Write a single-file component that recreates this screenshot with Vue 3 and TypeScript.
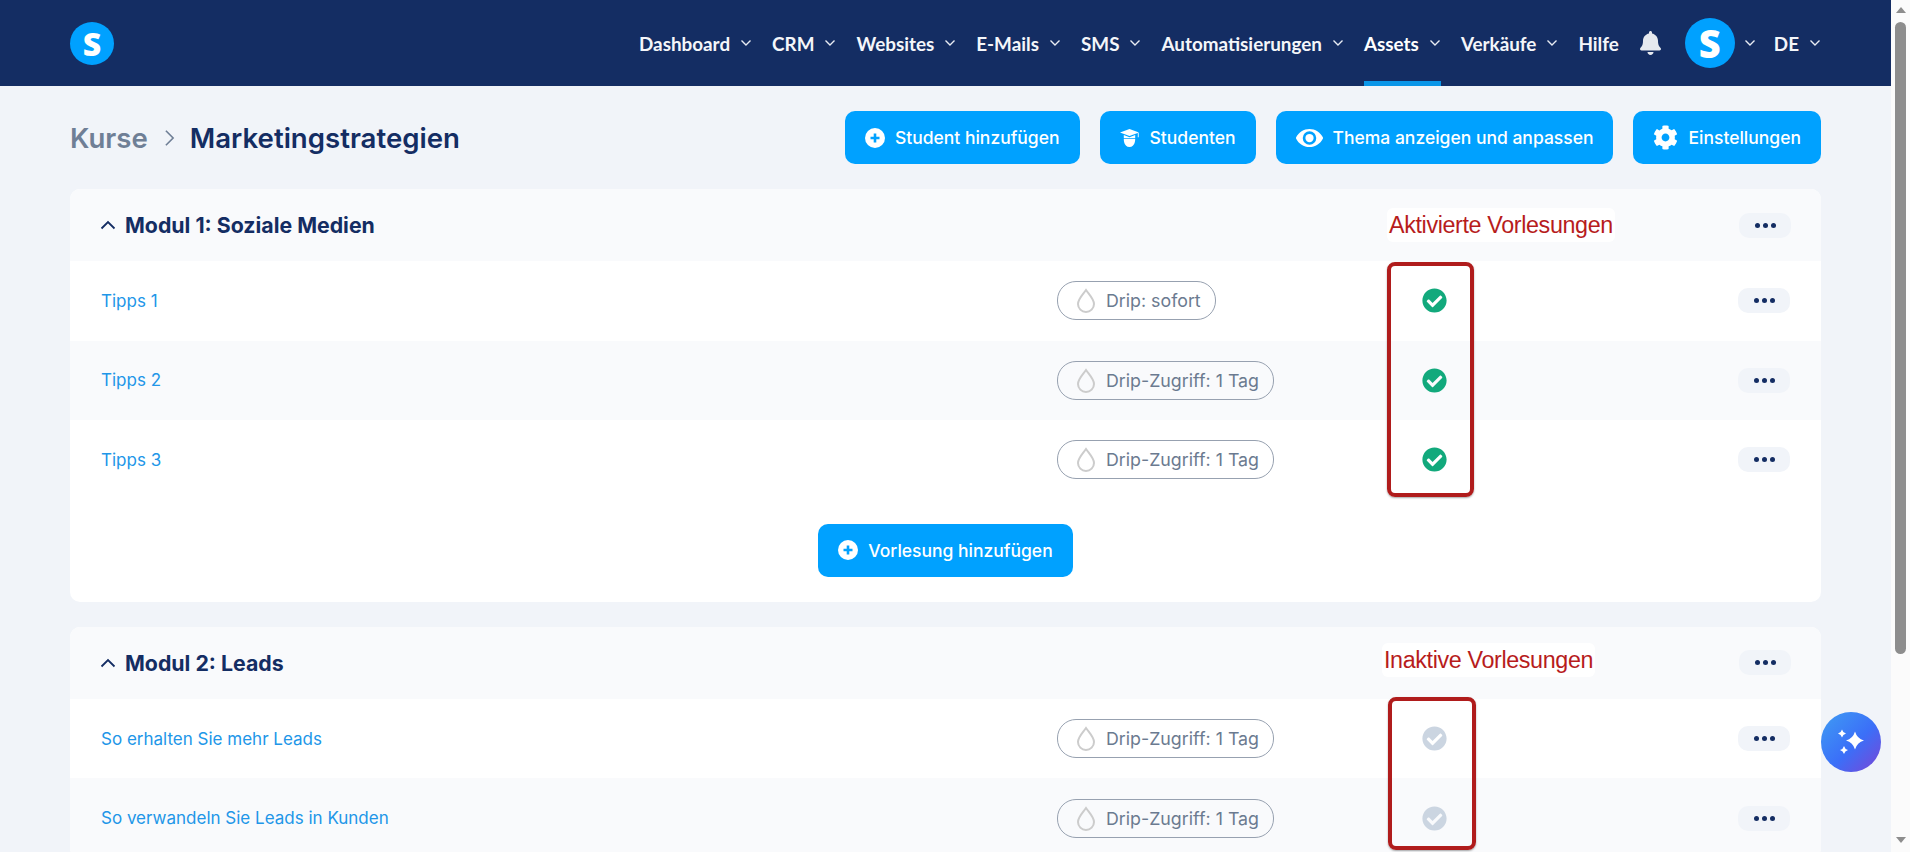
<script setup lang="ts">
interface Lecture {
  title: string;
  drip: string;
}
interface Module {
  title: string;
  active: boolean;
  note: string;
  lectures: Lecture[];
  canAdd: boolean;
}

const nav = [
  { label: "Dashboard", menu: true },
  { label: "CRM", menu: true },
  { label: "Websites", menu: true },
  { label: "E-Mails", menu: true },
  { label: "SMS", menu: true },
  { label: "Automatisierungen", menu: true },
  { label: "Assets", menu: true, current: true },
  { label: "Verkäufe", menu: true },
  { label: "Hilfe", menu: false },
];

const modules: Module[] = [
  {
    title: "Modul 1: Soziale Medien",
    active: true,
    note: "Aktivierte Vorlesungen",
    canAdd: true,
    lectures: [
      { title: "Tipps 1", drip: "Drip: sofort" },
      { title: "Tipps 2", drip: "Drip-Zugriff: 1 Tag" },
      { title: "Tipps 3", drip: "Drip-Zugriff: 1 Tag" },
    ],
  },
  {
    title: "Modul 2: Leads",
    active: false,
    note: "Inaktive Vorlesungen",
    canAdd: false,
    lectures: [
      { title: "So erhalten Sie mehr Leads", drip: "Drip-Zugriff: 1 Tag" },
      { title: "So verwandeln Sie Leads in Kunden", drip: "Drip-Zugriff: 1 Tag" },
    ],
  },
];

const checkPath =
  "M504 256c0 136.967-111.033 248-248 248S8 392.967 8 256 119.033 8 256 8s248 111.033 248 248zM227.314 387.314l184-184c6.248-6.248 6.248-16.379 0-22.627l-22.627-22.627c-6.248-6.249-16.379-6.249-22.628 0L216 308.118l-70.059-70.059c-6.248-6.248-16.379-6.248-22.628 0l-22.627 22.627c-6.248 6.248-6.248 16.379 0 22.627l104 104c6.249 6.25 16.379 6.25 22.628.001z";
</script>

<template>
  <div class="screen">
    <div class="page">
      <header class="topbar">
        <div class="logo">S</div>
        <nav class="nav">
          <a v-for="item in nav" :key="item.label" class="nav-item" :class="{ current: item.current }">
            {{ item.label }}
            <svg v-if="item.menu" class="chev" viewBox="0 0 12 8"><path d="M1.5 1.5 6 6l4.5-4.5" /></svg>
          </a>
          <svg class="bell" viewBox="0 0 448 512">
            <path d="M224 512c35.32 0 63.97-28.65 63.97-64H160.03c0 35.35 28.65 64 63.97 64zm215.39-149.71c-19.32-20.76-55.47-51.99-55.47-154.29 0-77.7-54.48-139.9-127.94-155.16V32c0-17.67-14.32-32-31.98-32s-31.98 14.33-31.98 32v20.84C118.56 68.1 64.08 130.3 64.08 208c0 102.3-36.15 133.53-55.47 154.29-6 6.45-8.66 14.16-8.61 21.71.11 16.4 12.98 32 32.1 32h383.8c19.12 0 32-15.6 32.1-32 .05-7.55-2.61-15.27-8.61-21.71z" />
          </svg>
          <div class="avatar">S</div>
          <svg class="chev" viewBox="0 0 12 8"><path d="M1.5 1.5 6 6l4.5-4.5" /></svg>
          <a class="nav-item lang">
            DE
            <svg class="chev" viewBox="0 0 12 8"><path d="M1.5 1.5 6 6l4.5-4.5" /></svg>
          </a>
        </nav>
      </header>

      <main class="content">
        <div class="title-bar">
          <div class="crumbs">
            <span class="crumb-parent">Kurse</span>
            <svg class="crumb-sep" viewBox="0 0 12 20"><path d="M2 2l8 8-8 8" /></svg>
            <span class="crumb-current">Marketingstrategien</span>
          </div>
          <div class="actions">
            <button class="btn">
              <svg class="btn-icon" viewBox="0 0 20 20"><circle cx="10" cy="10" r="10" fill="#fff" /><path d="M10 5.5v9M5.5 10h9" stroke="#00a1ff" stroke-width="2.6" /></svg>
              Student hinzufügen
            </button>
            <button class="btn">
              <svg class="btn-icon" viewBox="0 0 20 20" fill="#fff">
                <path d="M9.500 1 19 4.500 9.500 8 0 4.500z" />
                <path d="M3.800 7 9.500 9.200 15.200 7v3H3.800z" />
                <path d="M3.800 10.800h11.400c0 1 .1 8.200-5.700 8.200S3.800 11.800 3.800 10.800z" />
                <path d="M17.800 5h.9v4.200h-.9z" />
              </svg>
              Studenten
            </button>
            <button class="btn">
              <svg class="btn-icon eye" viewBox="0 0 576 512" fill="#fff">
                <path d="M572.52 241.4C518.29 135.59 410.93 64 288 64S57.68 135.64 3.48 241.41a32.35 32.35 0 0 0 0 29.19C57.71 376.41 165.07 448 288 448s230.32-71.64 284.52-177.41a32.35 32.35 0 0 0 0-29.19zM288 400a144 144 0 1 1 144-144 143.93 143.93 0 0 1-144 144z" />
                <circle cx="288" cy="256" r="88" />
              </svg>
              Thema anzeigen und anpassen
            </button>
            <button class="btn">
              <svg class="btn-icon gear" viewBox="0 0 512 512" fill="#fff">
                <path d="M487.4 315.7l-42.6-24.6c4.3-23.2 4.3-47 0-70.2l42.6-24.6c4.9-2.8 7.1-8.6 5.5-14-11.1-35.6-30-67.8-54.7-94.6-3.8-4.1-10-5.1-14.8-2.3L380.8 110c-17.9-15.4-38.5-27.3-60.8-35.1V25.8c0-5.6-3.9-10.5-9.4-11.7-36.7-8.2-74.3-7.8-109.2 0-5.5 1.2-9.4 6.1-9.4 11.7V75c-22.2 7.9-42.8 19.8-60.8 35.1L88.7 85.5c-4.9-2.8-11-1.9-14.8 2.3-24.7 26.7-43.6 58.9-54.7 94.6-1.7 5.4.6 11.2 5.5 14L67.3 221c-4.3 23.2-4.3 47 0 70.2l-42.6 24.6c-4.9 2.8-7.1 8.6-5.5 14 11.1 35.6 30 67.8 54.7 94.6 3.8 4.1 10 5.1 14.8 2.3l42.6-24.6c17.9 15.4 38.5 27.3 60.8 35.1v49.2c0 5.6 3.9 10.5 9.4 11.7 36.7 8.2 74.3 7.8 109.2 0 5.5-1.2 9.4-6.1 9.4-11.7v-49.2c22.2-7.9 42.8-19.8 60.8-35.1l42.6 24.6c4.9 2.8 11 1.9 14.8-2.3 24.7-26.7 43.6-58.9 54.7-94.6 1.5-5.5-.7-11.3-5.6-14.1zM256 336c-44.1 0-80-35.9-80-80s35.9-80 80-80 80 35.9 80 80-35.9 80-80 80z" />
              </svg>
              Einstellungen
            </button>
          </div>
        </div>

        <section v-for="mod in modules" :key="mod.title" class="module" :class="mod.active ? 'is-active' : 'is-inactive'">
          <div class="module-head">
            <div class="module-title">
              <svg class="collapse" viewBox="0 0 16 10"><path d="M1.5 8.5 8 2l6.5 6.5" /></svg>
              {{ mod.title }}
            </div>
            <button class="dots"><i /><i /><i /></button>
          </div>

          <div v-for="lecture in mod.lectures" :key="lecture.title" class="lecture">
            <a class="lecture-link">{{ lecture.title }}</a>
            <div>
              <span class="drip">
                <svg class="drop" viewBox="0 0 20 25"><path d="M10 2C7 6.5 2 11 2 16a8 8 0 0 0 16 0C18 11 13 6.5 10 2z" /></svg>
                {{ lecture.drip }}
              </span>
            </div>
            <svg class="state" :class="{ on: mod.active }" viewBox="0 0 512 512"><path :d="checkPath" /></svg>
            <button class="dots"><i /><i /><i /></button>
          </div>

          <div v-if="mod.canAdd" class="module-foot">
            <button class="btn">
              <svg class="btn-icon" viewBox="0 0 20 20"><circle cx="10" cy="10" r="10" fill="#fff" /><path d="M10 5.5v9M5.5 10h9" stroke="#00a1ff" stroke-width="2.6" /></svg>
              Vorlesung hinzufügen
            </button>
          </div>

          <span class="note">{{ mod.note }}</span>
          <div class="note-box"></div>
        </section>
      </main>

      <button class="fab" aria-label="KI">
        <svg viewBox="0 0 30 30" fill="#fff">
          <path d="M19 4.500Q21 11.500 28 13.500Q21 15.500 19 22.500Q17 15.500 10 13.500Q17 11.500 19 4.500z" />
          <path d="M6 2.500Q6.800 5.700 10 6.500Q6.800 7.300 6 10.500Q5.200 7.300 2 6.500Q5.200 5.700 6 2.500z" />
          <path d="M8 19Q8.800 22.200 12 23Q8.800 23.800 8 27Q7.200 23.800 4 23Q7.200 22.200 8 19z" />
        </svg>
      </button>
    </div>

    <div class="scrollbar">
      <span class="arrow up"></span>
      <span class="thumb"></span>
      <span class="arrow down"></span>
    </div>
  </div>
</template>

<style scoped>
.screen {
  display: flex;
  height: 852px;
  overflow: hidden;
  font-family: Inter, "Liberation Sans", sans-serif;
  color: #142d63;
}
.page {
  position: relative;
  flex: 1;
  min-width: 0;
  background: #f1f4f9;
}

.topbar {
  display: flex;
  align-items: center;
  justify-content: space-between;
  height: 86px;
  padding: 0 70px;
  background: #142d63;
}
.logo,
.avatar {
  display: flex;
  align-items: center;
  justify-content: center;
  border-radius: 50%;
  background: #00a1ff;
  color: #fff;
  font-family: "Open Sans", sans-serif;
  font-weight: 800;
}
.logo {
  width: 44px;
  height: 43px;
  font-size: 32px;
}
.nav {
  display: flex;
  align-items: center;
  height: 86px;
  color: #f4f6fa;
}
.nav-item {
  position: relative;
  display: flex;
  align-items: center;
  gap: 10px;
  height: 86px;
  margin-right: 20px;
  font-family: Lato, sans-serif;
  font-size: 18.850px;
  font-weight: 700;
}
.nav-item.current {
  color: #fff;
}
.nav-item.current::after {
  content: "";
  position: absolute;
  left: 0;
  right: 0;
  bottom: 0;
  height: 5px;
  background: #0a96e8;
}
.nav-item.lang {
  margin: 0 0 0 18px;
}
.chev {
  width: 12px;
  height: 8px;
  fill: none;
  stroke: #e8ecf3;
  stroke-width: 1.4;
}
.bell {
  width: 21px;
  height: 24px;
  margin: 0 24px 0 1px;
  fill: #e6e9ef;
}
.avatar {
  width: 50px;
  height: 50px;
  margin-right: 9px;
  font-size: 38px;
}

.content {
  padding: 25px 70px 0;
}
.title-bar {
  display: flex;
  align-items: center;
  justify-content: space-between;
  height: 53px;
  margin-bottom: 25px;
}
.crumbs {
  display: flex;
  align-items: center;
  font-size: 27.600px;
  font-weight: 600;
}
.crumb-parent {
  color: #6f7f96;
}
.crumb-sep {
  width: 11px;
  height: 18px;
  margin: 0 15px 0 16px;
  fill: none;
  stroke: #6f7f96;
  stroke-width: 1.8;
}
.actions {
  display: flex;
  gap: 20px;
}
.btn {
  display: inline-flex;
  align-items: center;
  gap: 10px;
  height: 53px;
  padding: 0 20px;
  border: 0;
  border-radius: 10px;
  background: #00a1ff;
  color: #fff;
  font-family: Inter, sans-serif;
  font-size: 17.500px;
  font-weight: 500;
  white-space: nowrap;
}
.btn-icon {
  flex: none;
  width: 20px;
  height: 20px;
}
.btn-icon.eye {
  width: 27px;
  height: 24px;
}
.btn-icon.gear {
  width: 25px;
  height: 25px;
}

.module {
  position: relative;
  margin-bottom: 25px;
  border-radius: 10px;
  background: #fff;
  overflow: hidden;
}
.module-head {
  display: flex;
  align-items: center;
  justify-content: space-between;
  height: 72px;
  padding: 0 30px;
  background: #f9fafc;
}
.module-title {
  display: flex;
  align-items: center;
  gap: 9px;
  font-size: 21.300px;
  font-weight: 700;
}
.collapse {
  width: 16px;
  height: 10px;
  fill: none;
  stroke: #142d63;
  stroke-width: 1.8;
}
.lecture {
  display: grid;
  grid-template-columns: 956px 365px 1fr auto;
  align-items: center;
  height: 79.600px;
  padding: 0 31px;
}
.lecture:nth-of-type(odd) {
  background: #f9fafc;
}
.lecture-link {
  color: #2196e8;
  font-size: 17px;
}
.drip {
  display: inline-flex;
  align-items: center;
  gap: 10px;
  height: 37px;
  padding: 0 14px 0 18px;
  border: 1px solid #97a1b0;
  border-radius: 19px;
  color: #6b7a90;
  font-size: 17.800px;
}
.drop {
  width: 20px;
  height: 25px;
  fill: none;
  stroke: #cccccc;
  stroke-width: 2;
}
.state {
  width: 25px;
  height: 25px;
  fill: #cbd5e1;
}
.state.on {
  fill: #12a97c;
}
.dots {
  display: flex;
  align-items: center;
  justify-content: center;
  gap: 3px;
  width: 52px;
  height: 25px;
  padding: 0;
  border: 0;
  border-radius: 10px;
  background: #f1f4f9;
}
.dots i {
  width: 5px;
  height: 5px;
  border-radius: 50%;
  background: #142d63;
}
.module-foot {
  display: flex;
  justify-content: center;
  padding: 24px 0 25px;
}

/* annotations drawn over the list */
.note {
  position: absolute;
  top: 19px;
  left: 1317px;
  padding: 3px 2px;
  border-radius: 6px;
  background: #fff;
  color: #b71c1c;
  font-family: "Liberation Sans", Arial, sans-serif;
  font-size: 23.300px;
  letter-spacing: -0.360px;
  line-height: 28px;
}
.is-inactive .note {
  top: 16px;
  left: 1312px;
}
.note-box {
  position: absolute;
  box-sizing: border-box;
  top: 73px;
  left: 1317px;
  width: 87px;
  height: 235px;
  border: 4px solid #b01c1c;
  border-radius: 8px;
  box-shadow: 0 1px 2px rgba(0, 0, 0, 0.35);
}
.is-inactive .note-box {
  top: 70px;
  left: 1318px;
  width: 88px;
  height: 153px;
}

.fab {
  position: absolute;
  left: 1821px;
  top: 712px;
  display: flex;
  align-items: center;
  justify-content: center;
  width: 60px;
  height: 60px;
  padding: 0;
  border: 0;
  border-radius: 50%;
  background: linear-gradient(135deg, #3f9df3 0%, #3b6ff8 55%, #7a45d6 100%);
}
.fab svg {
  width: 30px;
  height: 30px;
}

.scrollbar {
  display: flex;
  flex: none;
  flex-direction: column;
  align-items: center;
  width: 19px;
  background: #fbfbfb;
}
.arrow {
  flex: none;
  width: 0;
  height: 0;
  border-left: 5px solid transparent;
  border-right: 5px solid transparent;
}
.arrow.up {
  margin-top: 7px;
  border-bottom: 6px solid #8d8d8d;
}
.arrow.down {
  margin-top: auto;
  margin-bottom: 9px;
  border-top: 6px solid #8d8d8d;
}
.thumb {
  width: 11px;
  height: 632px;
  margin-top: 9px;
  border-radius: 6px;
  background: #8d8d8d;
}
</style>

<style>
html,
body {
  margin: 0;
  overflow: hidden;
}
</style>
